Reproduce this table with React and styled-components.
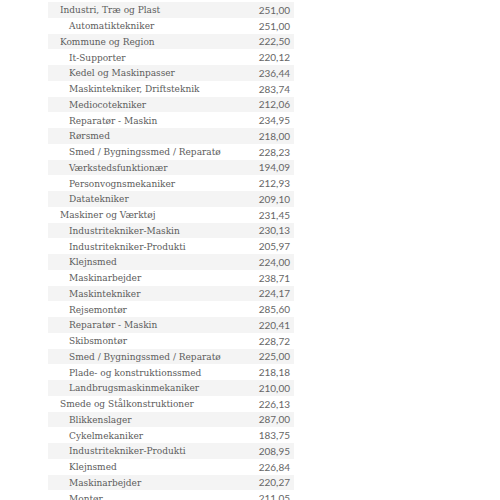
import React from 'react';
import styled, { createGlobalStyle } from 'styled-components';

const GlobalStyle = createGlobalStyle`
  body {
    margin: 0;
    background: #fff;
  }
`;

const Page = styled.div`
  padding: 2px 0 0 48px;
  height: 500px;
  overflow: hidden;
  box-sizing: border-box;
`;

const Table = styled.div`
  width: 246px;
  display: flex;
  flex-direction: column;
`;

const Row = styled.div`
  display: flex;
  align-items: center;
  justify-content: space-between;
  height: 15.75px;
  padding: 0 4px 0 ${(p) => (p.$sub ? 21 : 12)}px;
  background: ${(p) => (p.$striped ? '#f4f4f4' : '#fff')};
`;

const Name = styled.span`
  font-family: 'DejaVu Serif Condensed', 'DejaVu Serif', serif;
  font-size: 10px;
  color: #5c5c5c;
  white-space: nowrap;
`;

const Value = styled.span`
  font-family: Lato, 'Open Sans', sans-serif;
  font-size: 10px;
  color: #666;
`;

const rows = [
  ['Industri, Træ og Plast', '251,00', false],
  ['Automatiktekniker', '251,00', true],
  ['Kommune og Region', '222,50', false],
  ['It-Supporter', '220,12', true],
  ['Kedel og Maskinpasser', '236,44', true],
  ['Maskintekniker, Driftsteknik', '283,74', true],
  ['Mediocotekniker', '212,06', true],
  ['Reparatør - Maskin', '234,95', true],
  ['Rørsmed', '218,00', true],
  ['Smed / Bygningssmed / Reparatø', '228,23', true],
  ['Værkstedsfunktionær', '194,09', true],
  ['Personvognsmekaniker', '212,93', true],
  ['Datatekniker', '209,10', true],
  ['Maskiner og Værktøj', '231,45', false],
  ['Industritekniker-Maskin', '230,13', true],
  ['Industritekniker-Produkti', '205,97', true],
  ['Klejnsmed', '224,00', true],
  ['Maskinarbejder', '238,71', true],
  ['Maskintekniker', '224,17', true],
  ['Rejsemontør', '285,60', true],
  ['Reparatør - Maskin', '220,41', true],
  ['Skibsmontør', '228,72', true],
  ['Smed / Bygningssmed / Reparatø', '225,00', true],
  ['Plade- og konstruktionssmed', '218,18', true],
  ['Landbrugsmaskinmekaniker', '210,00', true],
  ['Smede og Stålkonstruktioner', '226,13', false],
  ['Blikkenslager', '287,00', true],
  ['Cykelmekaniker', '183,75', true],
  ['Industritekniker-Produkti', '208,95', true],
  ['Klejnsmed', '226,84', true],
  ['Maskinarbejder', '220,27', true],
  ['Montør', '211,05', true],
];

export default function App() {
  return (
    <Page>
      <GlobalStyle />
      <Table>
        {rows.map(([name, value, sub], i) => (
          <Row key={i} $sub={sub} $striped={i % 2 === 0}>
            <Name>{name}</Name>
            <Value>{value}</Value>
          </Row>
        ))}
      </Table>
    </Page>
  );
}
